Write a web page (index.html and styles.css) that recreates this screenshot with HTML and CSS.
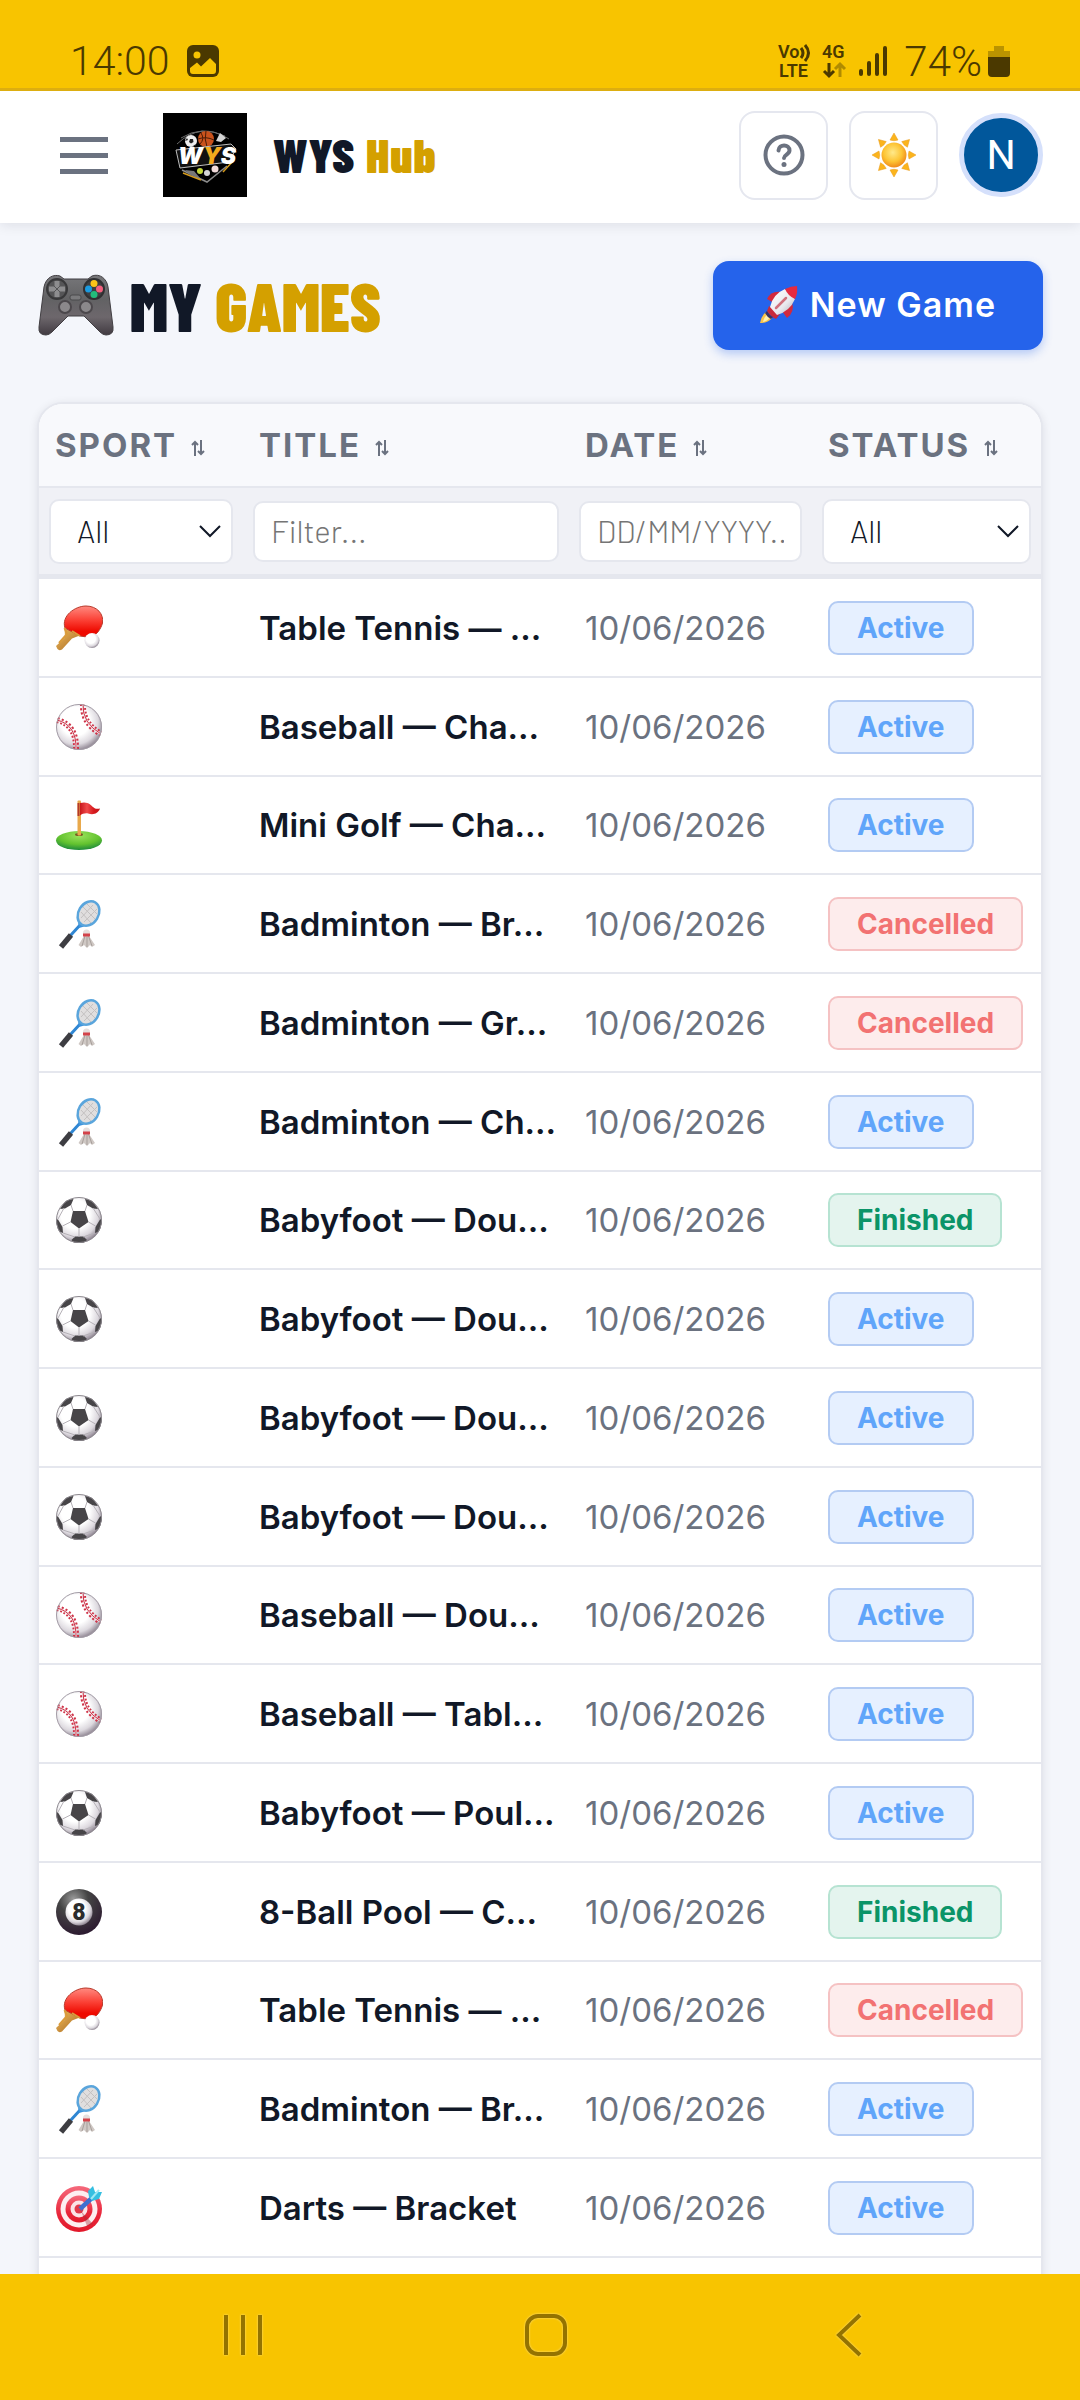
FILE: index.html
```
<!DOCTYPE html>
<html lang="en">
<head>
    <meta charset="UTF-8">
    <meta name="viewport" content="width=device-width, initial-scale=1.0">
    <title>WYS Hub - My Games</title>
    <link rel="stylesheet" href="styles.css">
</head>
<body>
    <!-- Sport icons, used by the table rows -->
    <svg class="sprite" width="0" height="0" aria-hidden="true">
        <defs>
            <radialGradient id="ballWhite" cx="42%" cy="38%" r="62%">
                <stop offset="0.5" stop-color="#ffffff"/>
                <stop offset="0.8" stop-color="#dcd8de"/>
                <stop offset="1" stop-color="#968d99"/>
            </radialGradient>
            <radialGradient id="ballBlack" cx="38%" cy="22%" r="80%">
                <stop offset="0" stop-color="#9a9a9a"/>
                <stop offset="0.4" stop-color="#444444"/>
                <stop offset="1" stop-color="#2c1a30"/>
            </radialGradient>
            <linearGradient id="paddleRed" x1="0" y1="0" x2="0" y2="1">
                <stop offset="0" stop-color="#ff8a80"/>
                <stop offset="0.45" stop-color="#fb4035"/>
                <stop offset="0.8" stop-color="#ee0a00"/>
            </linearGradient>
            <linearGradient id="wood" x1="0" y1="0" x2="1" y2="1">
                <stop offset="0" stop-color="#f2c063"/>
                <stop offset="1" stop-color="#a5651c"/>
            </linearGradient>
            <radialGradient id="green" cx="50%" cy="25%" r="75%">
                <stop offset="0" stop-color="#9be35c"/>
                <stop offset="0.6" stop-color="#62c22f"/>
                <stop offset="1" stop-color="#1e8a3c"/>
            </radialGradient>
            <linearGradient id="flagRed" x1="0" y1="0" x2="1" y2="0">
                <stop offset="0" stop-color="#c8171b"/>
                <stop offset="0.35" stop-color="#f04a4a"/>
                <stop offset="0.7" stop-color="#d5181c"/>
                <stop offset="1" stop-color="#c4181c"/>
            </linearGradient>
            <linearGradient id="targetRed" x1="0" y1="0" x2="0" y2="1">
                <stop offset="0" stop-color="#f56a7c"/>
                <stop offset="0.6" stop-color="#e9283c"/>
                <stop offset="1" stop-color="#e2182a"/>
            </linearGradient>
            <radialGradient id="sunFill" cx="45%" cy="40%" r="60%">
                <stop offset="0" stop-color="#ffe98a"/>
                <stop offset="0.6" stop-color="#fdc535"/>
                <stop offset="1" stop-color="#f08b1a"/>
            </radialGradient>
            <linearGradient id="padBody" x1="0" y1="0" x2="0" y2="1">
                <stop offset="0" stop-color="#77777a"/>
                <stop offset="0.4" stop-color="#626264"/>
                <stop offset="0.7" stop-color="#6d676c"/>
                <stop offset="1" stop-color="#413a41"/>
            </linearGradient>
            <linearGradient id="rocketBody" x1="0" y1="0" x2="1" y2="1">
                <stop offset="0" stop-color="#ffffff"/>
                <stop offset="0.6" stop-color="#e9e9ee"/>
                <stop offset="1" stop-color="#a9a9b3"/>
            </linearGradient>
            <clipPath id="ballClip"><circle cx="24" cy="26" r="23"/></clipPath>
        </defs>

        <symbol id="table-tennis" viewBox="0 0 48 52">
            <path d="M1 44 L10 35.500 L9.500 26 L26 33 L17 36.500 L7 47.500 Q4 49 2.500 47 Z" fill="url(#wood)"/>
            <path d="M10 26 C6 14 20 4 31 4 C42 4 49 12 47.500 21 C46 27 41 34 35 35.500 L25 34 Z" fill="url(#paddleRed)" stroke="#b83a2c" stroke-width="1"/>
            <path d="M9.500 26 L12 32 L4 41 M17 29 L25 34" fill="none" stroke="#d99b3c" stroke-width="2"/>
            <circle cx="37" cy="38.500" r="7.500" fill="url(#ballWhite)"/>
        </symbol>

        <symbol id="baseball" viewBox="0 0 48 52">
            <circle cx="24" cy="26" r="23" fill="url(#ballWhite)"/>
            <g clip-path="url(#ballClip)" fill="none" stroke="#cf3247">
                <path d="M28 3 Q27 22 46 33 M2 19 Q22 24 21 49" stroke-width="6" stroke-dasharray="2 2"/>
            </g>
            <g clip-path="url(#ballClip)" fill="none" stroke="#f3eef0">
                <path d="M28 3 Q27 22 46 33 M2 19 Q22 24 21 49" stroke-width="2"/>
            </g>
            <g clip-path="url(#ballClip)" fill="none" stroke="#cf3247">
                <path d="M28 3 Q27 22 46 33 M2 19 Q22 24 21 49" stroke-width="1"/>
            </g>
            <circle cx="24" cy="26" r="22.500" fill="none" stroke="#a39ca6" stroke-width="1"/>
        </symbol>

        <symbol id="golf" viewBox="0 0 48 52">
            <ellipse cx="24" cy="41.500" rx="23" ry="9.500" fill="url(#green)"/>
            <ellipse cx="24" cy="35.500" rx="4" ry="1.500" fill="#7a5a22"/>
            <rect x="22.500" y="1.500" width="3.500" height="35" rx="1" fill="#e9a94c"/>
            <rect x="22.500" y="4" width="2" height="13" fill="#b5392a"/>
            <path d="M25 4 C33 2 36 6 38 8 C40 10 42 10 45 9.500 C43 15 38 16 33 14.500 C30 14 27 15 25 16.500 Z" fill="url(#flagRed)"/>
        </symbol>

        <symbol id="badminton" viewBox="0 0 48 52">
            <path d="M26 26 L15 38" stroke="#2f86d3" stroke-width="3"/>
            <path d="M16 37 L6 49" stroke="#3d3d42" stroke-width="5.500"/>
            <path d="M23 24 L24 30 L31 28" fill="#3d93dc"/>
            <ellipse cx="33.500" cy="15.500" rx="10" ry="13" transform="rotate(32 33.500 15.500)" fill="#e0dede" stroke="#5aa5dc" stroke-width="2.500"/>
            <path d="M26 14 L36 25 M28 9 L40 21 M32 6 L42 16 M26 20 L38 7 M29 24 L42 11" stroke="#c4c1c1" stroke-width="1"/>
            <path d="M29 38 L34 38 L40 47 L37 49 L35 47 L32 50 L29 47 L26 49 L23.500 47 Z" fill="#cfc8c4"/>
            <path d="M30 38 L27 48 M32 38 L32 49 M33.500 38 L37 48" stroke="#a79f9b" stroke-width="1"/>
            <circle cx="31.500" cy="35" r="3.500" fill="#e6dfdd"/>
            <rect x="28" y="35.500" width="7" height="3" fill="#d3434a"/>
        </symbol>

        <symbol id="soccer" viewBox="0 0 48 52">
            <circle cx="24" cy="26" r="23" fill="url(#ballWhite)"/>
            <g clip-path="url(#ballClip)" fill="#474548">
                <path d="M18 17 L30 17 L33.500 28 L24 34.500 L15.500 28 Z"/>
                <path d="M5 15 L11 6 L18.500 5 L16 11 L10 14.500 Z"/>
                <path d="M30 5 L37 6 L43 15 L38 14.500 L32 11 Z"/>
                <path d="M0 25 L3 25.500 L7.500 33 L8 39 L3 37 Z"/>
                <path d="M48 25 L45 25.500 L40.500 33 L40 39 L45 37 Z"/>
                <path d="M16.500 46 L20 42.500 L28.500 42.500 L32 46 L28 50 L19 50 Z"/>
            </g>
            <path d="M18 17 L16 11 M30 17 L32 11 M33.500 28 L40.500 32 M24 34.500 L24 43 M15.500 28 L7.500 32 M3 25 L9 14 M45 25 L38 14 M8 39 L20 43 M40 39 L28 43" stroke="#b5b1b7" stroke-width="1"/>
            <circle cx="24" cy="26" r="22.500" fill="none" stroke="#8d898f" stroke-width="1"/>
        </symbol>

        <symbol id="darts" viewBox="0 0 48 52">
            <circle cx="24" cy="27" r="23" fill="url(#targetRed)"/>
            <circle cx="24" cy="27" r="18.500" fill="#fdeef0"/>
            <circle cx="24" cy="27" r="13.500" fill="url(#targetRed)"/>
            <circle cx="24" cy="27" r="8.500" fill="#fbe3e6"/>
            <circle cx="24" cy="27" r="4.500" fill="#e2394a"/>
            <path d="M26 29 L38 42 L32 44 Z" fill="#a02a38" opacity="0.4"/>
            <path d="M25 27 L38 15" stroke="#3f6fcf" stroke-width="4.500"/>
            <path d="M34 15 L33 9 L38 4 L40 10 L47 10 L44 17 L37 19 Z" fill="#35bfe0"/>
            <path d="M36 17 L44 8" stroke="#9fe9f5" stroke-width="2"/>
        </symbol>

        <symbol id="sort" viewBox="0 0 14 16">
            <path d="M4 16 V2 M1 5 L4 2 L7 5 M10 0 V14 M7 11 L10 14 L13 11" fill="none" stroke="currentColor" stroke-width="2"/>
        </symbol>
    </svg>

    <!-- System status bar -->
    <div class="status-bar">
        <div class="status-left">
            <span>14:00</span>
            <svg width="32" height="32" viewBox="0 0 32 32">
                <rect width="32" height="32" rx="6" fill="#4b3900"/>
                <circle cx="10" cy="10" r="3.500" fill="#f8c400"/>
                <path d="M3 23 L10 17.500 L14 21.500 L23 13 L29 19 V26 Q29 29 26 29 H6 Q3 29 3 26 Z" fill="#f8c400"/>
            </svg>
        </div>
        <div class="status-right">
            <svg width="34" height="34" viewBox="0 0 34 34">
                <text x="0" y="14" class="net-text">Vo</text>
                <text x="1" y="33" class="net-text">LTE</text>
                <path d="M23 4 Q27 9 23 14 M27 1 Q34 9 27 17" fill="none" stroke="#4b3900" stroke-width="3"/>
            </svg>
            <svg width="26" height="34" viewBox="0 0 26 34">
                <text x="0" y="14" class="net-text">4G</text>
                <path d="M7 19 V32 M2 27 L7 32 L12 27" fill="none" stroke="#4b3900" stroke-width="3"/>
                <path d="M18 33 V20 M13 25 L18 20 L23 25" fill="none" stroke="#b08b00" stroke-width="3"/>
            </svg>
            <svg width="30" height="32" viewBox="0 0 30 32">
                <path d="M3 26 V29 M11 18 V29 M19 10 V29 M27 3 V29" fill="none" stroke="#4b3900" stroke-width="4" stroke-linecap="round"/>
            </svg>
            <span class="battery-text">74%</span>
            <svg width="22" height="32" viewBox="0 0 22 32">
                <path d="M0 12 V6 H6 V1 H16 V6 H22 V12 Z" fill="#ba9300"/>
                <path d="M0 12 H22 V28 Q22 32 18 32 H4 Q0 32 0 28 Z" fill="#4b3900"/>
            </svg>
        </div>
    </div>

    <div class="app">
        <header class="header">
            <button class="menu-button" aria-label="Menu">
                <span></span>
                <span></span>
                <span></span>
            </button>
            <a class="brand" href="#">
                <svg class="logo" viewBox="0 0 84 84">
                    <rect width="84" height="84" fill="#000"/>
                    <path d="M18 25 Q38 12 62 23 M14 31 Q38 8 66 26" fill="none" stroke="#6b6b6b" stroke-width="1"/>
                    <circle cx="28" cy="28" r="6" fill="#eee"/>
                    <path d="M27 26 L30 26 L30.500 29 L28 30.500 L26 29 Z M22 28 L24 25 L25 27 Z M33 31 L30 33 L32 33 Z" fill="#222"/>
                    <circle cx="43" cy="26" r="8" fill="#c9521c"/>
                    <path d="M35 26 Q43 23 51 27 M43 18 Q41 26 44 34 M38 20 Q42 26 37 31" fill="none" stroke="#4a1c08" stroke-width="1"/>
                    <path d="M53 28 L57 20 L63 25 L58 29 Z" fill="#d5d5d5"/>
                    <path d="M13 37 L68 31 L73 36 L66 49 L17 55 Z" fill="#111" stroke="#bdbdbd" stroke-width="1"/>
                    <path d="M19 57 L44 69 L64 53" fill="none" stroke="#8a8a8a" stroke-width="1.500"/>
                    <path d="M20 60 L38 67 M60 59 L71 47" fill="none" stroke="#d49a1c" stroke-width="1.500"/>
                    <path d="M22 57 L31 58 L37 65 L27 62 Z" fill="#777"/>
                    <text x="15" y="51" class="logo-text">W<tspan fill="#f3ab1d">Y</tspan>S</text>
                    <circle cx="37" cy="58" r="3" fill="#c5d93b"/>
                    <circle cx="44" cy="60" r="3" fill="#d5d5d5"/>
                    <circle cx="52" cy="56" r="3.500" fill="#f2dcdc"/>
                </svg>
                <span class="brand-name">WYS <em>Hub</em></span>
            </a>
            <div class="header-actions">
                <button class="icon-button" aria-label="Help">
                    <svg width="42" height="42" viewBox="0 0 42 42" fill="none" stroke="#6b7280" stroke-width="4" stroke-linecap="round">
                        <circle cx="21" cy="21" r="18.500"/>
                        <path d="M15.500 16.500 C16 9.500 26.500 10 26.500 16.500 C26.500 20.500 21 20.500 21 24"/>
                        <circle cx="21" cy="30.500" r="2.500" fill="#6b7280" stroke="none"/>
                    </svg>
                </button>
                <button class="icon-button" aria-label="Light mode">
                    <svg width="44" height="44" viewBox="0 0 44 44">
                        <g fill="#fbb41c" stroke="#e99a1c" stroke-width="0.500">
                            <path d="M22 0 L26 7 Q22 8.500 18 7 Z"/>
                            <path d="M22 0 L26 7 Q22 8.500 18 7 Z" transform="rotate(45 22 22)"/>
                            <path d="M22 0 L26 7 Q22 8.500 18 7 Z" transform="rotate(90 22 22)"/>
                            <path d="M22 0 L26 7 Q22 8.500 18 7 Z" transform="rotate(135 22 22)"/>
                            <path d="M22 0 L26 7 Q22 8.500 18 7 Z" transform="rotate(180 22 22)"/>
                            <path d="M22 0 L26 7 Q22 8.500 18 7 Z" transform="rotate(225 22 22)"/>
                            <path d="M22 0 L26 7 Q22 8.500 18 7 Z" transform="rotate(270 22 22)"/>
                            <path d="M22 0 L26 7 Q22 8.500 18 7 Z" transform="rotate(315 22 22)"/>
                        </g>
                        <circle cx="22" cy="22" r="12.500" fill="url(#sunFill)"/>
                    </svg>
                </button>
                <button class="avatar">N</button>
            </div>
        </header>

        <main class="content">
            <div class="page-head">
                <h1 class="page-title">
                    <svg width="76" height="64" viewBox="0 0 76 64">
                        <path d="M6 14 C8 4 16 1 22 3 L26 6 H50 L54 3 C62 0 69 6 70 14 L75 54 Q76 62 68 62 Q65 62 62 59 L46 43 H30 L14 59 Q11 62 8 62 Q0 62 1 54 Z" fill="url(#padBody)" stroke="#413e42" stroke-width="1"/>
                        <circle cx="19" cy="16" r="10" fill="#555557" stroke="#38383a" stroke-width="2"/>
                        <path d="M16.500 8 H21.500 V13.500 H27 V18.500 H21.500 V24 H16.500 V18.500 H11 V13.500 H16.500 Z" fill="#8d8d8f"/>
                        <path d="M14 11 L24 21 M24 11 L14 21" stroke="#555557" stroke-width="1"/>
                        <circle cx="56" cy="16" r="10" fill="#3f3f41" stroke="#303032" stroke-width="2"/>
                        <circle cx="56" cy="10.500" r="3.500" fill="#fcc419"/>
                        <circle cx="50.500" cy="16" r="3.500" fill="#1b9be0"/>
                        <circle cx="61.500" cy="16" r="3.500" fill="#f4607e"/>
                        <circle cx="56" cy="21.500" r="3.500" fill="#22bd7c"/>
                        <rect x="32" y="22" width="11" height="5" rx="2" fill="#7a7a7c" stroke="#4a4a4c"/>
                        <circle cx="27" cy="34" r="6" fill="#8b888b" stroke="#4c484c" stroke-width="2"/>
                        <circle cx="48" cy="34" r="6" fill="#8b888b" stroke="#4c484c" stroke-width="2"/>
                    </svg>
                    <span>MY <em>GAMES</em></span>
                </h1>
                <button class="new-game">
                    <svg width="38" height="38" viewBox="0 0 38 38">
                        <path d="M0 37 Q1 30 6 26 L12 32 Q8 37 0 37 Z" fill="#f9c34b"/>
                        <path d="M3 36 Q4 31 7 29 L10 31 Q8 35 3 36 Z" fill="#fff0b0"/>
                        <path d="M7 13 Q11 4 22 6 L14 17 Z" fill="#d3293d"/>
                        <path d="M32 16 Q35 26 27 32 L22 25 Z" fill="#d3293d"/>
                        <path d="M9 20 L20 28 L16 33 Q10 30 7 25 Z" fill="#c92a3c"/>
                        <path d="M7 25 Q10 30 13 31 L11 33 Q7 31 5 27 Z" fill="#3c3160"/>
                        <path d="M10 21 Q13 8 25 3 L35 13 Q30 25 17 29 Z" fill="url(#rocketBody)"/>
                        <path d="M25 3 Q31 0 37 0 Q38 7 35 13 Q28 10 25 3 Z" fill="#e52a41"/>
                        <path d="M16 22 L26 12" stroke="#d0707c" stroke-width="2.500" stroke-linecap="round"/>
                    </svg>
                    <span>New Game</span>
                </button>
            </div>

            <div class="card">
                <table class="games">
                    <colgroup>
                        <col class="col-sport">
                        <col>
                        <col class="col-date">
                        <col class="col-status">
                    </colgroup>
                    <thead>
                        <tr class="labels">
                            <th><button class="sort">SPORT <svg><use href="#sort"/></svg></button></th>
                            <th><button class="sort">TITLE <svg><use href="#sort"/></svg></button></th>
                            <th><button class="sort">DATE <svg><use href="#sort"/></svg></button></th>
                            <th><button class="sort">STATUS <svg><use href="#sort"/></svg></button></th>
                        </tr>
                        <tr class="filters">
                            <td><select aria-label="Sport"><option>All</option></select></td>
                            <td><input type="text" aria-label="Title" placeholder="Filter..."></td>
                            <td><input type="text" aria-label="Date" placeholder="DD/MM/YYYY..."></td>
                            <td><select aria-label="Status"><option>All</option></select></td>
                        </tr>
                    </thead>
                    <tbody>
                        <tr><td><svg class="sport"><use href="#table-tennis"/></svg></td><td class="title">Table Tennis — …</td><td class="date">10/06/2026</td><td><span class="badge active">Active</span></td></tr>
                        <tr><td><svg class="sport"><use href="#baseball"/></svg></td><td class="title">Baseball — Cha…</td><td class="date">10/06/2026</td><td><span class="badge active">Active</span></td></tr>
                        <tr><td><svg class="sport"><use href="#golf"/></svg></td><td class="title">Mini Golf — Cha…</td><td class="date">10/06/2026</td><td><span class="badge active">Active</span></td></tr>
                        <tr><td><svg class="sport"><use href="#badminton"/></svg></td><td class="title">Badminton — Br…</td><td class="date">10/06/2026</td><td><span class="badge cancelled">Cancelled</span></td></tr>
                        <tr><td><svg class="sport"><use href="#badminton"/></svg></td><td class="title">Badminton — Gr…</td><td class="date">10/06/2026</td><td><span class="badge cancelled">Cancelled</span></td></tr>
                        <tr><td><svg class="sport"><use href="#badminton"/></svg></td><td class="title">Badminton — Ch…</td><td class="date">10/06/2026</td><td><span class="badge active">Active</span></td></tr>
                        <tr><td><svg class="sport"><use href="#soccer"/></svg></td><td class="title">Babyfoot — Dou…</td><td class="date">10/06/2026</td><td><span class="badge finished">Finished</span></td></tr>
                        <tr><td><svg class="sport"><use href="#soccer"/></svg></td><td class="title">Babyfoot — Dou…</td><td class="date">10/06/2026</td><td><span class="badge active">Active</span></td></tr>
                        <tr><td><svg class="sport"><use href="#soccer"/></svg></td><td class="title">Babyfoot — Dou…</td><td class="date">10/06/2026</td><td><span class="badge active">Active</span></td></tr>
                        <tr><td><svg class="sport"><use href="#soccer"/></svg></td><td class="title">Babyfoot — Dou…</td><td class="date">10/06/2026</td><td><span class="badge active">Active</span></td></tr>
                        <tr><td><svg class="sport"><use href="#baseball"/></svg></td><td class="title">Baseball — Dou…</td><td class="date">10/06/2026</td><td><span class="badge active">Active</span></td></tr>
                        <tr><td><svg class="sport"><use href="#baseball"/></svg></td><td class="title">Baseball — Tabl…</td><td class="date">10/06/2026</td><td><span class="badge active">Active</span></td></tr>
                        <tr><td><svg class="sport"><use href="#soccer"/></svg></td><td class="title">Babyfoot — Poul…</td><td class="date">10/06/2026</td><td><span class="badge active">Active</span></td></tr>
                        <tr>
                            <td>
                                <svg class="sport" viewBox="0 0 48 52">
                                    <circle cx="24" cy="26" r="23" fill="url(#ballBlack)"/>
                                    <circle cx="24" cy="26" r="13.500" fill="url(#ballWhite)"/>
                                    <text x="24" y="34" text-anchor="middle" class="pool-digit">8</text>
                                </svg>
                            </td>
                            <td class="title">8-Ball Pool — C…</td><td class="date">10/06/2026</td><td><span class="badge finished">Finished</span></td>
                        </tr>
                        <tr><td><svg class="sport"><use href="#table-tennis"/></svg></td><td class="title">Table Tennis — …</td><td class="date">10/06/2026</td><td><span class="badge cancelled">Cancelled</span></td></tr>
                        <tr><td><svg class="sport"><use href="#badminton"/></svg></td><td class="title">Badminton — Br…</td><td class="date">10/06/2026</td><td><span class="badge active">Active</span></td></tr>
                        <tr><td><svg class="sport"><use href="#darts"/></svg></td><td class="title">Darts — Bracket</td><td class="date">10/06/2026</td><td><span class="badge active">Active</span></td></tr>
                        <tr><td></td><td></td><td></td><td></td></tr>
                    </tbody>
                </table>
            </div>
        </main>
    </div>

    <!-- System navigation bar -->
    <nav class="nav-bar">
        <button aria-label="Recent apps">
            <svg width="48" height="48" viewBox="0 0 48 48">
                <path d="M7 4 V44 M24 4 V44 M41 4 V44"/>
            </svg>
        </button>
        <button aria-label="Home">
            <svg width="48" height="48" viewBox="0 0 48 48">
                <rect x="5" y="5" width="38" height="38" rx="11"/>
            </svg>
        </button>
        <button aria-label="Back">
            <svg width="48" height="48" viewBox="0 0 48 48">
                <path d="M35 4 L14 24 L35 44"/>
            </svg>
        </button>
    </nav>
</body>
</html>
```

FILE: styles.css
```
* {
    box-sizing: border-box;
}

body {
    margin: 0;
    height: 100vh;
    display: flex;
    flex-direction: column;
    overflow: hidden;
    font-family: Inter, Roboto, sans-serif;
    color: #111827;
    background-color: #f4f6fb;
}

button {
    padding: 0;
    border: none;
    background: none;
    font-family: inherit;
    color: inherit;
    cursor: pointer;
}

svg {
    display: block;
    flex-shrink: 0;
    overflow: visible;
}

em {
    font-style: normal;
    color: #d4a000;
}

.sprite {
    position: absolute;
}

/* Status bar */
.status-bar {
    flex-shrink: 0;
    height: 91px;
    padding: 34px 70px 0 70px;
    display: flex;
    justify-content: space-between;
    align-items: center;
    background-color: #f8c400;
    border-bottom: 3px solid #ddae10;
    font-family: Roboto, sans-serif;
    font-size: 41px;
    font-weight: 300;
    color: #4b3900;
}

.status-left,
.status-right {
    display: flex;
    align-items: center;
}

.status-left {
    gap: 17px;
}

.status-right {
    gap: 10px;
}

.battery-text {
    margin: 0 -4px 0 6px;
    font-size: 42px;
}

.net-text {
    font-family: Roboto, sans-serif;
    font-size: 18px;
    font-weight: 600;
    fill: #4b3900;
}

/* Header */
.app {
    flex: 1;
    min-height: 0;
    overflow: hidden;
}

.header {
    height: 132px;
    padding: 0 37px 4px 60px;
    display: flex;
    align-items: center;
    background-color: #fff;
    box-shadow: 0 2px 12px rgba(17, 24, 39, 0.1);
}

.menu-button {
    width: 48px;
    display: grid;
    gap: 11px;
}

.menu-button span {
    height: 5px;
    background-color: #6b7280;
}

.brand {
    margin-left: 55px;
    display: flex;
    align-items: center;
    gap: 26px;
    text-decoration: none;
    color: #111827;
}

.logo {
    width: 84px;
    height: 84px;
}

.logo-text {
    font-family: Inter, sans-serif;
    font-size: 23px;
    font-weight: 900;
    font-style: italic;
    fill: #fff;
}

.brand-name {
    padding-bottom: 2px;
    font-family: "Barlow Condensed", "Roboto Condensed", Roboto, sans-serif;
    font-size: 48px;
    font-weight: 900;
    letter-spacing: 1px;
}

.header-actions {
    margin-left: auto;
    display: flex;
    align-items: center;
    gap: 21px;
}

.icon-button {
    width: 89px;
    height: 89px;
    display: grid;
    place-items: center;
    border: 2px solid #e5e7ef;
    border-radius: 16px;
}

.avatar {
    width: 84px;
    height: 84px;
    border: 5px solid #d5e0fb;
    border-radius: 50%;
    background-color: #01579b;
    color: #fff;
    font-family: Roboto, sans-serif;
    font-size: 41px;
    font-weight: 400;
}

/* Page head */
.content {
    padding: 38px 37px 0;
}

.page-head {
    display: flex;
    justify-content: space-between;
    align-items: center;
    margin-bottom: 52px;
}

.page-title {
    margin: 0;
    padding: 0 0 2px 1px;
    display: flex;
    align-items: center;
    gap: 16px;
    font-family: "Barlow Condensed", "Roboto Condensed", Roboto, sans-serif;
    font-size: 67px;
    line-height: 80px;
    font-weight: 900;
}

.new-game {
    height: 89px;
    padding: 0 47px 2px;
    display: flex;
    align-items: center;
    gap: 12px;
    border-radius: 16px;
    background-color: #2563eb;
    box-shadow: 0 4px 10px rgba(37, 99, 235, 0.3);
    color: #fff;
    font-size: 34px;
    font-weight: 600;
    letter-spacing: 1px;
}

/* Games table */
.card {
    border: 2px solid #e5e7ee;
    border-radius: 26px;
    background-color: #fff;
    box-shadow: 0 2px 10px rgba(17, 24, 39, 0.1);
    overflow: hidden;
}

.games {
    width: 100%;
    table-layout: fixed;
    border-collapse: separate;
    border-spacing: 0;
}

.col-sport {
    width: 204px;
}

.col-date {
    width: 243px;
}

.col-status {
    width: 229px;
}

.games th,
.games td {
    padding: 0 0 0 16px;
    border-bottom: 2px solid #e5e7ee;
    text-align: left;
    vertical-align: middle;
    white-space: nowrap;
}

.labels th {
    height: 84px;
    background-color: #f8f9fc;
}

.sort {
    display: flex;
    align-items: center;
    gap: 14px;
    color: #6b7280;
    font-size: 33px;
    font-weight: 700;
    letter-spacing: 2px;
}

.sort svg {
    width: 14px;
    height: 16px;
    margin-top: 6px;
}

.games .filters td {
    height: 91px;
    padding: 0 10px;
    border-bottom-width: 5px;
    background-color: #f0f1f6;
}

.filters input,
.filters select {
    display: block;
    width: 100%;
    border: 2px solid #e5e7ee;
    border-radius: 10px;
    background-color: #fff;
    color: #111827;
    font-family: Barlow, "Barlow Semi Condensed", Roboto, sans-serif;
    font-size: 31px;
    font-weight: 300;
}

.filters input {
    height: 61px;
    padding: 0 16px 2px;
}

.filters input::placeholder {
    color: #757575;
}

.filters select {
    height: 65px;
    padding: 0 26px 2px;
    appearance: none;
    background-image: url("data:image/svg+xml,%3Csvg xmlns='http://www.w3.org/2000/svg' width='24' height='14' viewBox='0 0 24 14'%3E%3Cpath d='M2 2 L12 12 L22 2' fill='none' stroke='%23111827' stroke-width='2'/%3E%3C/svg%3E");
    background-repeat: no-repeat;
    background-position: right 9px center;
}

.games tbody td {
    height: 99px;
}

.games tbody tr:nth-child(4n + 3) td {
    height: 98px;
}

.sport {
    width: 48px;
    height: 52px;
}

.pool-digit {
    font-family: Roboto, sans-serif;
    font-size: 23px;
    font-weight: 900;
    fill: #2c2c2c;
}

.title {
    font-size: 33px;
    font-weight: 600;
}

.date {
    font-size: 33px;
    color: #6b7280;
}

.badge {
    display: inline-block;
    padding: 0 27px;
    border: 2px solid;
    border-radius: 10px;
    font-size: 28px;
    line-height: 50px;
    font-weight: 700;
    vertical-align: middle;
}

.active {
    color: #60a5fa;
    background-color: #e6f0ff;
    border-color: #b3cbf3;
}

.cancelled {
    color: #f27272;
    background-color: #fdecec;
    border-color: #f5c2c3;
}

.finished {
    color: #0b9468;
    background-color: #e4f4ee;
    border-color: #b6e3d2;
}

/* Navigation bar */
.nav-bar {
    flex-shrink: 0;
    position: relative;
    height: 126px;
    padding: 0 207px 4px 219px;
    display: flex;
    justify-content: space-between;
    align-items: center;
    background-color: #f8c400;
}

.nav-bar svg {
    fill: none;
    stroke: #947300;
    stroke-width: 4;
    filter: drop-shadow(0 0 1px #ffe27a);
}
```
